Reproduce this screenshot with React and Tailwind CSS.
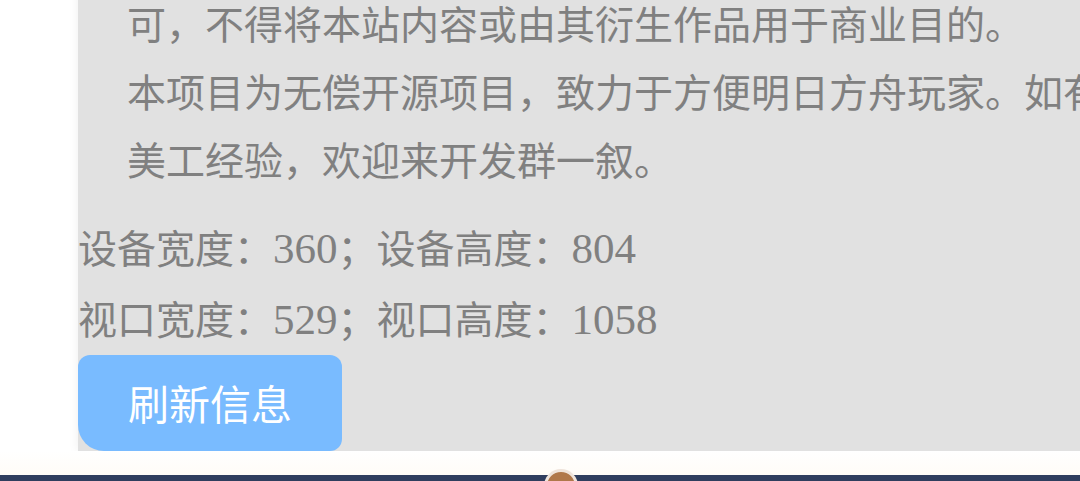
import React from "react";

const cjk = { fontFamily: '"Noto Sans CJK SC", "Noto Sans", sans-serif' };
const num = { fontFamily: '"Liberation Serif", "Noto Sans CJK SC", serif' };

function Num({ children }) {
  return (
    <span className="text-[43px]" style={num}>
      {children}
    </span>
  );
}

export default function App() {
  const device = { w: 360, h: 804 };
  const view = { w: 529, h: 1058 };

  return (
    <div
      className="relative h-[481px] w-[1080px] overflow-hidden bg-white flex flex-col"
      style={cjk}
    >
      <div className="pl-[78px] flex-none">
        <div className="w-[1100px] bg-[#e1e1e1] shadow-[0_0_10px_rgba(0,0,0,0.07)]">
          <div className="mt-[-12px] pl-[49px] text-[39px] leading-[68px] text-[#808080] whitespace-nowrap">
            <p>可，不得将本站内容或由其衍生作品用于商业目的。</p>
            <p>
              本项目为无偿开源项目，致力于方便明日方舟玩家。如有前端或
              <br />
              美工经验，欢迎来开发群一叙。
            </p>
          </div>

          <div className="mt-[20px] text-[39px] leading-[69px] text-[#808080] whitespace-nowrap">
            <p>
              设备宽度：<Num>{device.w}</Num>；设备高度：<Num>{device.h}</Num>
            </p>
            <p>
              视口宽度：<Num>{view.w}</Num>；视口高度：<Num>{view.h}</Num>
            </p>
          </div>

          <button className="mt-[1px] flex h-[96px] w-[264px] items-center justify-center rounded-[12px] rounded-bl-[26px] bg-[#79bbff] text-[41px] text-white">
            刷新信息
          </button>
        </div>
      </div>

      <div className="h-[24px] flex-none bg-gradient-to-b from-white to-[#fffcf7]" />

      <div className="relative flex-1 bg-[#2f3e5e]">
        <div className="absolute left-[544px] top-[-6px] h-[34px] w-[34px] rounded-full border-[3px] border-white/80 bg-[#b0784a]" />
      </div>
    </div>
  );
}
